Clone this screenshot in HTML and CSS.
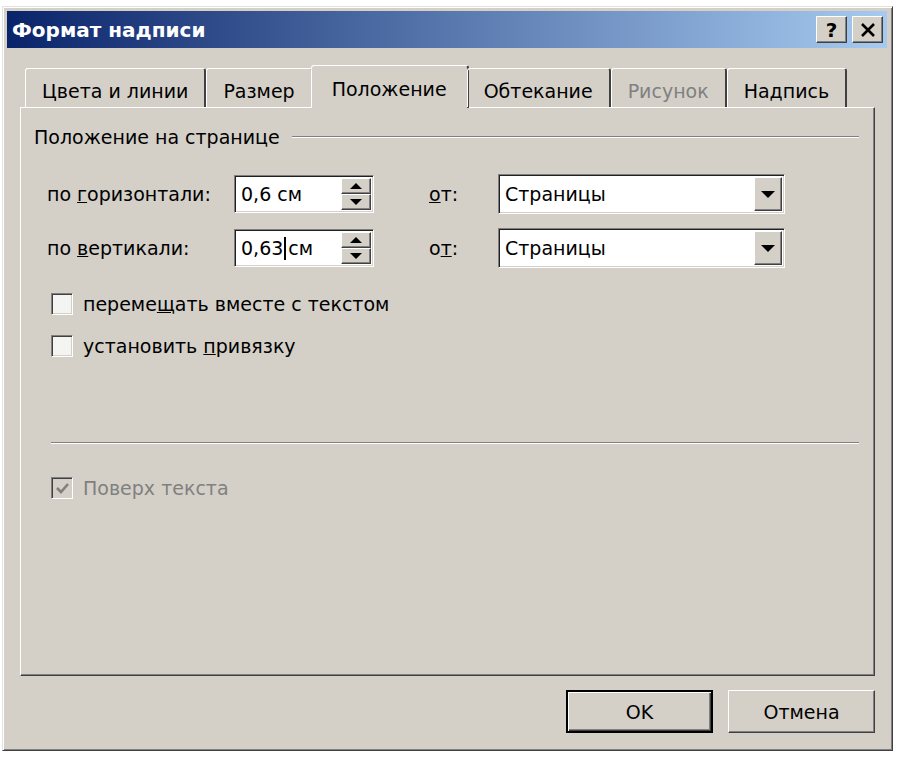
FILE: index.html
```html
<!DOCTYPE html>
<html lang="ru">
<head>
  <meta charset="UTF-8" />
  <title>Формат надписи</title>
  <link rel="stylesheet" href="styles.css">
</head>
<body>
  <div class="window">
    <!-- заголовок -->
    <div class="titlebar">
      <span class="title">Формат надписи</span>
      <div class="caption-buttons">
        <button class="cap-btn help">?</button>
        <button class="cap-btn">
          <svg width="16" height="14" viewBox="0 0 16 14">
            <path d="M2 1 L14 13 M14 1 L2 13" stroke="#000" stroke-width="2.6" />
          </svg>
        </button>
      </div>
    </div>

    <!-- вкладки -->
    <div class="tabs">
      <div class="tab">Цвета и линии</div>
      <div class="tab">Размер</div>
      <div class="tab active">Положение</div>
      <div class="tab">Обтекание</div>
      <div class="tab disabled">Рисунок</div>
      <div class="tab">Надпись</div>
    </div>

    <div class="panel">
      <div class="group-head">
        <span>Положение на странице</span>
        <div class="etched"></div>
      </div>

      <div class="field-row">
        <span class="row-label">по <u>г</u>оризонтали:</span>
        <div class="spin-field">
          <span class="value">0,6 см</span>
          <div class="spin">
            <div class="spin-btn"><i class="arrow-up"></i></div>
            <div class="spin-btn"><i class="arrow-down"></i></div>
          </div>
        </div>
        <span class="from-label"><u>о</u>т:</span>
        <div class="combo">
          <span class="value">Страницы</span>
          <div class="drop"><i class="arrow-down"></i></div>
        </div>
      </div>

      <div class="field-row">
        <span class="row-label">по <u>в</u>ертикали:</span>
        <div class="spin-field">
          <span class="value">0,63<span class="caret"></span>см</span>
          <div class="spin">
            <div class="spin-btn"><i class="arrow-up"></i></div>
            <div class="spin-btn"><i class="arrow-down"></i></div>
          </div>
        </div>
        <span class="from-label">о<u>т</u>:</span>
        <div class="combo">
          <span class="value">Страницы</span>
          <div class="drop"><i class="arrow-down"></i></div>
        </div>
      </div>

      <div class="check-row first">
        <span class="checkbox"></span>
        <span>переме<u>щ</u>ать вместе с текстом</span>
      </div>
      <div class="check-row">
        <span class="checkbox"></span>
        <span>установить <u>п</u>ривязку</span>
      </div>

      <div class="separator"></div>

      <div class="check-row disabled">
        <span class="checkbox checked">
          <svg width="15" height="13" viewBox="0 0 15 13">
            <path d="M2 6 L6 10 L13 2" fill="none" stroke="#808080" stroke-width="2.6" />
          </svg>
        </span>
        <span>Поверх текста</span>
      </div>
    </div>

    <div class="footer">
      <button class="btn btn-default">OK</button>
      <button class="btn">Отмена</button>
    </div>
  </div>
</body>
</html>
```

FILE: styles.css
```css
body {
  margin: 0;
  background: #fff;
  font-family: "DejaVu Sans", sans-serif;
  font-size: 19px;
  color: #000;
}

.window {
  box-sizing: border-box;
  width: 891px;
  height: 745px;
  margin: 6px 0 0 2px;
  padding: 4px 5px 0 4px;
  background: #d4d0c8;
  border: 1px solid;
  border-color: #e4e2dc #404040 #404040 #e4e2dc;
  box-shadow: inset 1px 1px #fff, inset -1px -1px #808080;
  display: flex;
  flex-direction: column;
}

/* заголовок */
.titlebar {
  height: 37px;
  display: flex;
  align-items: center;
  justify-content: space-between;
  padding: 0 4px 0 5px;
  background: linear-gradient(to right, #0a246a, #a6caf0);
}

.title {
  color: #fff;
  font-weight: bold;
  font-size: 20px;
}

.caption-buttons {
  display: flex;
  gap: 5px;
}

.cap-btn {
  box-sizing: border-box;
  width: 31px;
  height: 27px;
  padding: 0;
  background: #d4d0c8;
  border: 1px solid;
  border-color: #fff #404040 #404040 #fff;
  box-shadow: inset -1px -1px #808080;
  display: flex;
  align-items: center;
  justify-content: center;
  font-family: "DejaVu Sans", sans-serif;
  font-weight: bold;
  font-size: 20px;
  color: #000;
}

/* вкладки */
.tabs {
  display: flex;
  align-items: flex-end;
  margin: 17px 0 0 13px;
  padding-left: 5px;
  position: relative;
  z-index: 1;
}

.tab {
  box-sizing: border-box;
  height: 39px;
  padding: 11px 16px 0;
  border-top: 1px solid #fff;
  border-left: 1px solid #fff;
  border-right: 2px solid #404040;
  border-radius: 3px 3px 0 0;
  white-space: nowrap;
}

.tab.active {
  height: 43px;
  margin: 0 -2px -1px;
  padding: 12px 20px 0;
  background: #d4d0c8;
}

.tab.disabled {
  color: #808080;
}

.panel {
  flex: 1;
  margin: 0 12px 0 13px;
  padding: 18px 15px 0 13px;
  border: 1px solid;
  border-color: #fff #404040 #404040 #fff;
  box-shadow: inset -1px -1px #808080;
}

.group-head {
  display: flex;
  align-items: center;
  gap: 12px;
  height: 22px;
}

.etched {
  flex: 1;
  border-top: 1px solid #808080;
  border-bottom: 1px solid #fff;
}

/* строки с полями */
.field-row {
  display: flex;
  align-items: center;
  margin: 26px 0 0 13px;
}

.field-row + .field-row {
  margin-top: 14px;
}

.row-label {
  width: 187px;
}

.from-label {
  width: 69px;
  margin-left: 55px;
}

.spin-field,
.combo {
  box-sizing: border-box;
  display: flex;
  align-items: stretch;
  background: #fff;
  border: 1px solid;
  border-color: #808080 #fff #fff #808080;
  box-shadow: inset 1px 1px #202020, inset -1px -1px #d4d0c8;
  padding: 2px;
  font-size: 19px;
}

.spin-field {
  width: 140px;
  height: 38px;
}

.combo {
  width: 287px;
  height: 40px;
}

.value {
  flex: 1;
  align-self: center;
  padding-left: 4px;
  white-space: nowrap;
}

.caret {
  display: inline-block;
  width: 2px;
  height: 23px;
  margin: 0 2px 0 1px;
  background: #000;
  vertical-align: -5px;
}

.spin {
  width: 30px;
  display: flex;
  flex-direction: column;
}

.spin-btn,
.drop {
  flex: 1;
  display: flex;
  align-items: center;
  justify-content: center;
  background: #d4d0c8;
  border: 1px solid;
  border-color: #fff #404040 #404040 #fff;
  box-shadow: inset -1px -1px #808080;
}

.drop {
  flex: 0 0 28px;
  box-sizing: border-box;
}

.arrow-up,
.arrow-down {
  width: 0;
  height: 0;
  border-left: 6px solid transparent;
  border-right: 6px solid transparent;
}

.arrow-up {
  border-bottom: 6px solid #000;
}

.arrow-down {
  border-top: 6px solid #000;
}

.drop .arrow-down {
  border-left-width: 7px;
  border-right-width: 7px;
  border-top-width: 7px;
}

/* флажки */
.check-row {
  display: flex;
  align-items: center;
  gap: 10px;
  margin: 20px 0 0 17px;
  height: 22px;
}

.check-row.first {
  margin-top: 25px;
}

.checkbox {
  box-sizing: border-box;
  width: 22px;
  height: 22px;
  background: #f4f4f2;
  border: 1px solid;
  border-color: #808080 #fff #fff #808080;
  box-shadow: inset 1px 1px #404040, inset -1px -1px #d4d0c8;
  display: flex;
  align-items: center;
  justify-content: center;
}

.checkbox.checked {
  background: #d4d0c8;
}

.check-row.disabled {
  color: #808080;
  margin-top: 33px;
}

.separator {
  margin: 85px 0 0 17px;
  border-top: 1px solid #808080;
  border-bottom: 1px solid #fff;
}

/* кнопки */
.footer {
  display: flex;
  justify-content: flex-end;
  gap: 15px;
  padding: 14px 12px 17px 0;
}

.btn {
  box-sizing: border-box;
  width: 147px;
  height: 43px;
  background: #d4d0c8;
  border: 1px solid;
  border-color: #fff #404040 #404040 #fff;
  box-shadow: inset -1px -1px #808080;
  font-family: "DejaVu Sans", sans-serif;
  font-size: 19px;
  color: #000;
}

.btn-default {
  border: 2px solid #000;
  box-shadow: inset 1px 1px #fff, inset -1px -1px #404040, inset -2px -2px #808080;
}
```
